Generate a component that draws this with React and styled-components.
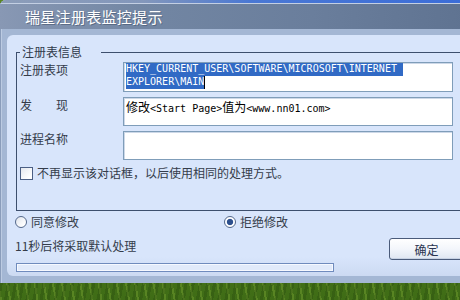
import React from "react";
import styled, { createGlobalStyle } from "styled-components";

const GlobalStyle = createGlobalStyle`
  html, body {
    margin: 0;
    padding: 0;
  }
  body {
    font-family: "Noto Sans CJK SC", "Noto Sans", sans-serif;
  }
`;

const Desktop = styled.div`
  width: 460px;
  height: 300px;
  overflow: hidden;
  background:
    repeating-linear-gradient(100deg, rgba(30, 60, 10, 0.25) 0 3px, transparent 3px 7px),
    repeating-linear-gradient(80deg, rgba(160, 200, 70, 0.25) 0 2px, transparent 2px 9px),
    linear-gradient(180deg, #6f9e2c 0%, #55861f 50%, #3f6c16 100%);
`;

const Window = styled.div`
  width: 480px;
  background: #a4b7d4;
  border-radius: 6px 0 0 0;
  overflow: hidden;
  box-shadow: inset 1px 0 0 #8a9dbb, inset 2px 0 0 #bccbe2;
`;

const TopEdge = styled.div`
  height: 3px;
  background: linear-gradient(90deg, #8c9db9 0%, #8397bb 30%, #4a78d4 52%, #3a6cd8 100%);
  border-bottom: 1px solid #c3cfe3;
`;

const TitleBar = styled.div`
  height: 25px;
  display: flex;
  align-items: center;
  padding-left: 25px;
  background: linear-gradient(90deg, #8898b4 0%, #7286a3 30%, #6a7e9c 65%, #5e7290 100%);
  color: #ffffff;
  font-size: 15px;
  letter-spacing: 0.3px;
  text-shadow: 1px 1px 0 rgba(60, 75, 100, 0.5);
`;

const Frame = styled.div`
  padding: 6px 0 7px 7px;
`;

const Client = styled.div`
  display: flex;
  flex-direction: column;
  padding-bottom: 4px;
  background: linear-gradient(180deg, #d8e5fb 0%, #d8e5fb 92%, #ccdaf2 100%);
  border-radius: 6px 0 0 6px;
  color: #343c4a;
  font-size: 12px;
  line-height: 16px;
`;

const Group = styled.fieldset`
  margin: 9px 0 0 9px;
  padding: 2px 0 29px 3px;
  border: 1px solid #3d4f6d;
  min-width: 0;
`;

const Legend = styled.legend`
  padding: 0 19px 0 2px;
  font-size: 12px;
  line-height: 16px;
  color: #2f3a4a;
`;

const Fields = styled.div`
  display: grid;
  grid-template-columns: 103px 330px;
  row-gap: 5px;
  align-items: start;
`;

const FieldLabel = styled.div`
  font-size: 12px;
  line-height: 16px;
  color: #343c4a;
`;

const TextBox = styled.div`
  box-sizing: border-box;
  height: ${(p) => p.$h}px;
  padding: ${(p) => p.$pt || 0}px 2px 0;
  background: #ffffff;
  border: 1px solid #7f9db9;
  box-shadow: inset 1px 1px 0 #cdd8e8;
  font-family: "DejaVu Sans Mono", "Liberation Mono", monospace;
  font-size: 10px;
  line-height: 13px;
  color: #000000;
  white-space: pre;
`;

const Line = styled.div`
  display: flex;
  height: 13px;
`;

const Selected = styled.span`
  display: inline-block;
  height: 13px;
  line-height: 11px;
  background: #316ac5;
  color: #ffffff;
`;

const Caret = styled.span`
  display: inline-block;
  width: 1px;
  height: 13px;
  background: #000000;
`;

const Cjk = styled.span`
  font-family: "Noto Sans CJK SC", sans-serif;
  font-size: 12px;
`;

const CheckRow = styled.label`
  display: flex;
  align-items: center;
  gap: 4px;
  margin-top: 5px;
  height: 16px;
`;

const CheckBox = styled.span`
  box-sizing: border-box;
  width: 13px;
  height: 13px;
  border: 1px solid #4b5f84;
  background: linear-gradient(135deg, #e4e8ee 0%, #ffffff 80%);
`;

const RadioRow = styled.div`
  display: flex;
  margin-top: 3px;
  padding-left: 8px;
  height: 16px;
`;

const RadioItem = styled.label`
  display: flex;
  align-items: center;
  gap: 4px;
  width: ${(p) => p.$w || "auto"};
`;

const RadioDot = styled.span`
  box-sizing: border-box;
  width: 12px;
  height: 12px;
  border-radius: 50%;
  border: 1px solid #55698c;
  background: ${(p) =>
    p.$on
      ? "radial-gradient(circle, #2d4f8c 0 2.6px, #5d7aac 3px, #ffffff 3.6px)"
      : "linear-gradient(135deg, #dfe4ec 0%, #ffffff 80%)"};
`;

const Footer = styled.div`
  display: flex;
  align-items: flex-start;
  margin-top: 8px;
  padding-left: 8px;
  padding-right: 16px;
`;

const Countdown = styled.div`
  line-height: 16px;
  color: #343c4a;
`;

const OkButton = styled.button`
  box-sizing: border-box;
  margin-left: auto;
  width: 75px;
  height: 22px;
  padding: 0;
  border: 1px solid #4a5b7a;
  border-radius: 3px;
  background: linear-gradient(180deg, #ffffff 0%, #f3f6fb 50%, #dfe6f1 100%);
  box-shadow: inset -1px -1px 0 #c7d2e3;
  font-family: "Noto Sans CJK SC", sans-serif;
  font-size: 12px;
  color: #2a3550;
`;

const Progress = styled.div`
  box-sizing: border-box;
  margin: 3px 0 0 9px;
  width: 318px;
  height: 9px;
  border: 1px solid #6f8bbd;
  background: #e1eafa;
  box-shadow: inset 0 0 0 1px #f6f9ff;
`;

export default function App() {
  return (
    <Desktop>
      <GlobalStyle />
      <Window>
        <TopEdge />
        <TitleBar>瑞星注册表监控提示</TitleBar>
        <Frame>
          <Client>
            <Group>
              <Legend>注册表信息</Legend>
              <Fields>
                <FieldLabel>注册表项</FieldLabel>
                <TextBox $h={30}>
                  <Line>
                    <Selected>{"HKEY_CURRENT_USER\\SOFTWARE\\MICROSOFT\\INTERNET "}</Selected>
                  </Line>
                  <Line>
                    <Selected>{"EXPLORER\\MAIN"}</Selected>
                    <Caret />
                  </Line>
                </TextBox>
                <FieldLabel>发　　现</FieldLabel>
                <TextBox $h={29} $pt={2}>
                  <Cjk>修改</Cjk>
                  {"<Start Page>"}
                  <Cjk>值为</Cjk>
                  {"<www.nn01.com>"}
                </TextBox>
                <FieldLabel>进程名称</FieldLabel>
                <TextBox $h={29} />
              </Fields>
              <CheckRow>
                <CheckBox />
                不再显示该对话框，以后使用相同的处理方式。
              </CheckRow>
            </Group>
            <RadioRow>
              <RadioItem $w="209px">
                <RadioDot />
                同意修改
              </RadioItem>
              <RadioItem>
                <RadioDot $on />
                拒绝修改
              </RadioItem>
            </RadioRow>
            <Footer>
              <Countdown>11秒后将采取默认处理</Countdown>
              <OkButton>确定</OkButton>
            </Footer>
            <Progress />
          </Client>
        </Frame>
      </Window>
    </Desktop>
  );
}
